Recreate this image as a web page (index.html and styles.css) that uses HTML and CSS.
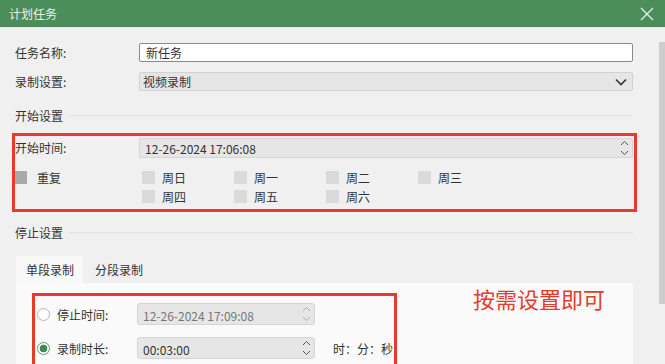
FILE: index.html
```html
<!DOCTYPE html>
<html lang="zh">
<head>
<meta charset="utf-8">
<link rel="stylesheet" href="styles.css">
</head>
<body>
<div class="window">
  <div class="titlebar">
    <span class="title">计划任务</span>
    <svg class="close" width="14" height="14" viewBox="0 0 14 14"><path d="M1 1L13 13M13 1L1 13" stroke="#e6efe8" stroke-width="1.3" fill="none"/></svg>
  </div>
  <div class="titleline"></div>
  <div class="body">
    <div class="main">
      <div class="row first">
        <span class="label">任务名称:</span>
        <div class="input">新任务</div>
      </div>
      <div class="row second">
        <span class="label">录制设置:</span>
        <div class="select"><span>视频录制</span>
          <svg width="12" height="8" viewBox="0 0 12 8"><path d="M1 1.5L6 6.5L11 1.5" stroke="#333" stroke-width="1.6" fill="none"/></svg>
        </div>
      </div>
      <div class="section start-sec"><span>开始设置</span><i class="rule"></i></div>
      <div class="redbox start-box">
        <div class="row inrow">
          <span class="label">开始时间:</span>
          <div class="field">
            <span>12-26-2024 17:06:08</span>
            <svg class="spin" width="9" height="16" viewBox="0 0 9 16"><path d="M1 5L4.5 1.5L8 5M1 11L4.5 14.5L8 11" stroke="#555" stroke-width="1" fill="none"/></svg>
          </div>
        </div>
        <div class="repeat">
          <div class="chk-item rep"><i class="cb dark"></i><span>重复</span></div>
          <div class="days">
            <div class="chk-item"><i class="cb"></i><span>周日</span></div>
            <div class="chk-item"><i class="cb"></i><span>周一</span></div>
            <div class="chk-item"><i class="cb"></i><span>周二</span></div>
            <div class="chk-item"><i class="cb"></i><span>周三</span></div>
            <div class="chk-item"><i class="cb"></i><span>周四</span></div>
            <div class="chk-item"><i class="cb"></i><span>周五</span></div>
            <div class="chk-item"><i class="cb"></i><span>周六</span></div>
          </div>
        </div>
      </div>
      <div class="section stop-sec"><span>停止设置</span><i class="rule"></i></div>
      <div class="tabs">
        <div class="tab active">单段录制</div>
        <div class="tab">分段录制</div>
      </div>
      <div class="panel">
        <div class="redbox stop-box">
          <div class="srow">
            <i class="radio"></i>
            <span class="slabel">停止时间:</span>
            <div class="sfield disabled">
              <span>12-26-2024 17:09:08</span>
              <svg class="spin" width="9" height="16" viewBox="0 0 9 16"><path d="M1 5L4.5 1.5L8 5M1 11L4.5 14.5L8 11" stroke="#aaa" stroke-width="1" fill="none"/></svg>
            </div>
          </div>
          <div class="srow r2">
            <i class="radio on"></i>
            <span class="slabel">录制时长:</span>
            <div class="sfield">
              <span>00:03:00</span>
              <svg class="spin" width="9" height="16" viewBox="0 0 9 16"><path d="M1 5L4.5 1.5L8 5M1 11L4.5 14.5L8 11" stroke="#555" stroke-width="1" fill="none"/></svg>
            </div>
            <span class="unit">时：分：秒</span>
          </div>
        </div>
        <div class="note">按需设置即可</div>
      </div>
    </div>
    <div class="scroll"></div>
  </div>
</div>
</body>
</html>
```
FILE: styles.css
```css
* { box-sizing: border-box; }
html, body { margin: 0; padding: 0; }
body {
  width: 665px; height: 364px; overflow: hidden;
  background: #f0f0f0;
  font-family: "Noto Sans CJK SC", "Microsoft YaHei", sans-serif;
  font-size: 12px; color: #333;
}
.window { width: 665px; height: 364px; overflow: hidden; }
.titlebar {
  height: 27px; background: #4b8d5b;
  display: flex; align-items: center; justify-content: space-between;
  padding: 0 11px 0 9px;
}
.title { color: #e9f1eb; font-size: 12px; }
.titleline { height: 1px; background: #dfeae2; }
.body { display: flex; }
.main { width: 625px; margin-left: 12px; }
.scroll { width: 6px; height: 262px; margin-top: 14px; margin-left: auto; background: #cdcdcd; }

.row { display: grid; grid-template-columns: 124px 494px; align-items: center; padding-left: 3px; }
.row.first { margin-top: 15px; height: 19px; }
.row.second { margin-top: 10px; height: 19px; }
.label { line-height: 14px; }
.input {
  height: 19px; background: #fff; border: 1px solid #8a8a8a; border-radius: 2px;
  padding-left: 6px; line-height: 17px;
}
.select {
  height: 19px; background: #e6e6e6; border: 1px solid #d3d3d3; border-radius: 2px;
  padding: 0 5px 0 3px; display: flex; align-items: center; justify-content: space-between;
}
.section { display: flex; align-items: center; padding-left: 3px; height: 14px; }
.section .rule { flex: 1; height: 1px; background: #e2e2e2; margin: 0 4px 0 6px; }
.start-sec { margin-top: 17px; }
.stop-sec { margin-top: 13px; }

.redbox { border: 3px solid #e63b2b; }
.start-box { margin-top: 11px; height: 79px; padding-top: 2px; }
.inrow { padding-left: 0; height: 20px; }
.field {
  height: 20px; background: #e6e6e6; border: 1px solid #d5d5d5; border-radius: 2px;
  padding: 0 3px 0 5px; display: flex; align-items: center; justify-content: space-between;
  font-size: 12px;
}
.spin { display: block; }
.repeat { display: flex; margin-top: 13px; }
.rep { width: 127px; }
.days { display: grid; grid-template-columns: repeat(4, 92px); row-gap: 6px; }
.chk-item { display: flex; align-items: center; height: 13px; white-space: nowrap; }
.cb { display: block; width: 13px; height: 13px; background: #dadada; margin-right: 7px; }
.rep .cb { width: 12px; margin-right: 10px; }
.cb.dark { background: #a9a9a9; }

.tabs { display: flex; margin-top: 17px; margin-left: 4px; height: 27px; }
.tab { padding: 0 9px 0 10px; line-height: 27px; white-space: nowrap; }
.tab.active { background: #f8f8f8; }
.tab + .tab { margin-left: 2px; }
.panel {
  margin-left: 4px; width: 617px; height: 90px; background: #fafafa;
  display: flex; align-items: flex-start;
}
.stop-box { margin-top: 10px; margin-left: 16px; width: 365px; height: 90px; padding: 7px 0 0 2px; }
.srow { display: flex; align-items: center; height: 22px; }
.srow.r2 { margin-top: 12px; }
.radio {
  display: block; width: 13px; height: 13px; border-radius: 50%;
  border: 1px solid #b5b5b5; background: #fff; margin-right: 7px;
}
.radio.on { border-color: #5e9a6c; background: radial-gradient(circle, #3d8a52 0 3.5px, #fff 4.2px); }
.slabel { width: 80px; white-space: nowrap; }
.sfield {
  width: 178px; height: 22px; background: #e6e6e6; border: 1px solid #d5d5d5; border-radius: 3px;
  display: flex; align-items: center; justify-content: space-between; padding: 0 3px 0 5px;
}
.sfield.disabled { color: #777; }
.sfield span { padding-top: 3px; }
.unit { margin-left: 18px; white-space: nowrap; }
.note { margin-left: 76px; margin-top: 2px; color: #e53b2b; font-size: 22px; line-height: 26px; white-space: nowrap; }
```
